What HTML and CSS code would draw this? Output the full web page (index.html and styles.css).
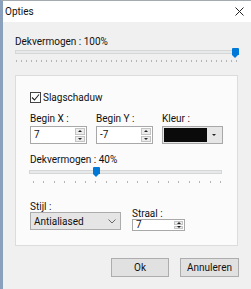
FILE: index.html
```html
<!DOCTYPE html>
<html lang="nl">
<head>
    <meta charset="UTF-8">
    <meta name="viewport" content="width=device-width, initial-scale=1.0">
    <title>Opties</title>
    <link rel="stylesheet" href="styles.css">
</head>
<body>
    <div class="window">
        <div class="titlebar">
            <span class="title">Opties</span>
            <svg class="close" width="9" height="9" viewBox="0 0 9 9">
                <path d="M0.5 0.5 L8.5 8.5 M8.5 0.5 L0.5 8.5" stroke="#222" stroke-width="1"/>
            </svg>
        </div>

        <div class="content">
            <div class="label">Dekvermogen : 100%</div>
            <div class="slider slider-main">
                <div class="track"></div>
                <div class="thumb" style="left: 217px"></div>
                <div class="ticks"></div>
            </div>

            <div class="group">
                <label class="check">
                    <span class="box">
                        <svg width="9" height="9" viewBox="0 0 9 9">
                            <path d="M1 4.5 L3.5 7 L8 1.5" fill="none" stroke="#222" stroke-width="1.1"/>
                        </svg>
                    </span>
                    Slagschaduw
                </label>

                <div class="row">
                    <div class="field">
                        <div class="label">Begin X :</div>
                        <div class="spin">
                            <span class="value">7</span>
                            <span class="spin-btns"><i class="up"></i><i class="down"></i></span>
                        </div>
                    </div>
                    <div class="field">
                        <div class="label">Begin Y :</div>
                        <div class="spin">
                            <span class="value">-7</span>
                            <span class="spin-btns"><i class="up"></i><i class="down"></i></span>
                        </div>
                    </div>
                    <div class="field">
                        <div class="label">Kleur :</div>
                        <div class="color">
                            <span class="swatch"></span>
                            <span class="drop"><i class="down"></i></span>
                        </div>
                    </div>
                </div>

                <div class="label label-gap">Dekvermogen : 40%</div>
                <div class="slider slider-inner">
                    <div class="track"></div>
                    <div class="thumb" style="left: 64px"></div>
                    <div class="ticks"></div>
                </div>

                <div class="row row-bottom">
                    <div class="field">
                        <div class="label">Stijl :</div>
                        <div class="select">
                            <span>Antialiased</span>
                            <svg width="8" height="5" viewBox="0 0 8 5">
                                <path d="M0.5 0.5 L4 4 L7.5 0.5" fill="none" stroke="#666" stroke-width="1"/>
                            </svg>
                        </div>
                    </div>
                    <div class="field field-straal">
                        <div class="label">Straal :</div>
                        <div class="spin spin-small">
                            <span class="value">7</span>
                            <span class="spin-btns"><i class="up"></i><i class="down"></i></span>
                        </div>
                    </div>
                </div>
            </div>

            <div class="actions">
                <button class="btn btn-ok">Ok</button>
                <button class="btn btn-cancel">Annuleren</button>
            </div>
        </div>
    </div>
</body>
</html>
```

FILE: styles.css
```css
html, body {
    margin: 0;
    padding: 0;
}
body {
    width: 251px;
    height: 289px;
    overflow: hidden;
    font-family: Roboto, "Noto Sans", sans-serif;
    font-size: 10px;
    color: #111;
    background-color: #f0f0f0;
}
.window {
    height: 289px;
    border-left: 3px solid #8aa0bb;
    border-top: 1px solid #a3aab0;
    background-color: #f0f0f0;
    box-sizing: border-box;
}
.titlebar {
    height: 21px;
    background-color: #ffffff;
    display: flex;
    align-items: center;
    justify-content: space-between;
    padding: 0 7px 0 2px;
}
.title {
    line-height: 13px;
}
.content {
    padding: 13px 13px 0 12px;
}
.label {
    line-height: 13px;
    height: 13px;
}

/* sliders */
.slider {
    position: relative;
    height: 16px;
}
.track {
    position: absolute;
    left: 0;
    right: 0;
    top: 2px;
    height: 2px;
    background-color: #e7eaea;
    border: 1px solid #d6d6d6;
}
.thumb {
    position: absolute;
    top: 0;
    width: 7px;
    height: 7px;
    background-color: #0078d7;
    border-radius: 1px 1px 0 0;
}
.thumb::after {
    content: "";
    position: absolute;
    top: 7px;
    left: 0;
    border-left: 3.5px solid transparent;
    border-right: 3.5px solid transparent;
    border-top: 3px solid #0078d7;
}
.ticks {
    position: absolute;
    top: 12px;
    height: 2px;
}
.slider-main .ticks {
    left: 1px;
    right: 1px;
    background-image: repeating-linear-gradient(to right, #b4b4b4 0, #b4b4b4 1px, transparent 1px, transparent 5px);
}
.slider-inner .ticks {
    left: 4px;
    right: 0;
    top: 14px;
    background-image: repeating-linear-gradient(to right, #b4b4b4 0, #b4b4b4 1px, transparent 1px, transparent 10.39px);
}

/* group panel */
.group {
    margin-top: 11px;
    height: 171px;
    background-color: #fbfbfb;
    border: 1px solid #dcdcdc;
    box-sizing: border-box;
    padding: 16px 14px 0 14px;
}
.check {
    display: flex;
    align-items: center;
    gap: 2px;
    height: 11px;
    line-height: 13px;
}
.box {
    width: 11px;
    height: 11px;
    border: 1px solid #444;
    background-color: #fff;
    box-sizing: border-box;
    display: flex;
    align-items: center;
    justify-content: center;
}
.row {
    display: flex;
    gap: 9px;
    margin-top: 9px;
}
.field .label {
    margin-bottom: 1px;
}
.spin, .color, .select {
    display: flex;
    align-items: stretch;
    border: 1px solid #a8a8a8;
    background-color: #fff;
    height: 18px;
    box-sizing: border-box;
}
.spin {
    width: 57px;
}
.value {
    flex: 1;
    padding-left: 3px;
    line-height: 16px;
}
.spin-btns {
    display: flex;
    flex-direction: column;
    width: 10px;
    padding: 1px;
    gap: 1px;
}
.spin-btns i {
    flex: 1;
    background-color: #ececec;
    border: 1px solid #c4c4c4;
    position: relative;
}
.spin-btns i::after, .drop i::after {
    content: "";
    position: absolute;
    left: 50%;
    top: 50%;
    margin-left: -2px;
    margin-top: -1px;
    border-left: 2px solid transparent;
    border-right: 2px solid transparent;
}
.up::after {
    border-bottom: 2px solid #222;
}
.down::after {
    border-top: 2px solid #222;
}
.color {
    width: 61px;
    padding: 1px;
    background-color: #e6e6e6;
}
.swatch {
    flex: 1;
    background-color: #0a0a0a;
}
.drop {
    width: 14px;
    display: flex;
}
.drop i {
    flex: 1;
    position: relative;
}
.label-gap {
    margin-top: 9px;
}
.slider-inner {
    margin: 1px 1px 0 -1px;
}
.slider-inner .track {
    top: 3px;
}
.row-bottom {
    gap: 11px;
    margin-top: 18px;
}
.row-bottom .label {
    line-height: 11px;
    height: 11px;
    margin-bottom: 0;
}
.select {
    width: 91px;
    background-color: #e5e5e5;
    border-color: #acacac;
    justify-content: space-between;
    align-items: center;
    padding: 0 4px 0 3px;
}
.field-straal {
    padding-top: 7px;
}
.spin-small {
    width: 53px;
    height: 12px;
}
.spin-small .value {
    line-height: 10px;
}
.spin-small .spin-btns {
    width: 9px;
}

/* buttons */
.actions {
    display: flex;
    justify-content: flex-end;
    gap: 11px;
    margin: 12px -1px 0 0;
}
.btn {
    height: 19px;
    padding: 0;
    font-family: inherit;
    font-size: 10px;
    color: #111;
    background-color: #e1e1e1;
    border: 1px solid #adadad;
}
.btn-ok {
    width: 58px;
}
.btn-cancel {
    width: 59px;
}
```
